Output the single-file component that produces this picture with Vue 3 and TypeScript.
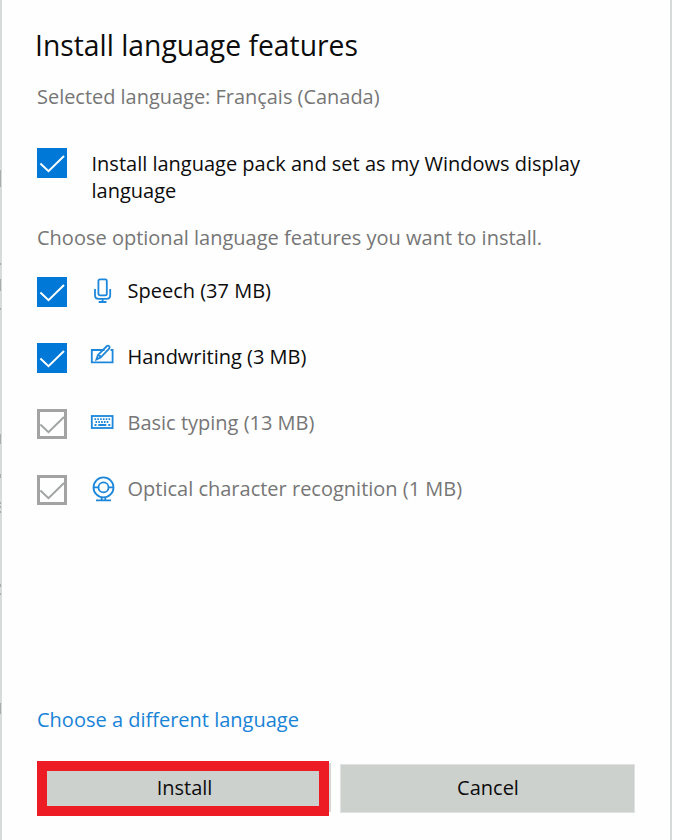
<script setup lang="ts">
import { ref } from 'vue'

type IconName = 'mic' | 'pen' | 'keyboard' | 'camera'

interface Feature {
  id: IconName
  label: string
  checked: boolean
  locked: boolean
}

const installPack = ref(true)
const features = ref<Feature[]>([
  { id: 'mic', label: 'Speech (37 MB)', checked: true, locked: false },
  { id: 'pen', label: 'Handwriting (3 MB)', checked: true, locked: false },
  { id: 'keyboard', label: 'Basic typing (13 MB)', checked: true, locked: true },
  { id: 'camera', label: 'Optical character recognition (1 MB)', checked: true, locked: true },
])

function toggle(feature: Feature) {
  if (!feature.locked) feature.checked = !feature.checked
}
</script>

<template>
  <main class="dialog">
    <svg class="edge" viewBox="0 0 2 840" aria-hidden="true">
      <path d="M.5 170v17M.5 263v2M.5 279v12M.5 308v2M.5 434v10M.5 474v4M.5 502v2M.5 506v2M.5 511v2M.5 584v3M.5 593v2M.5 703v11" />
    </svg>
    <h1 class="title">Install language features</h1>
    <p class="muted selected">Selected language: Français (Canada)</p>

    <div class="pack" @click="installPack = !installPack">
      <span class="box" :class="{ on: installPack }">
        <svg v-if="installPack" viewBox="0 0 30 30"><path d="M3.4 15.6 11.5 23.2 27 8" /></svg>
      </span>
      <span class="pack-label">Install language pack and set as my Windows display<br />language</span>
    </div>

    <p class="muted choose">Choose optional language features you want to install.</p>

    <ul class="features">
      <li v-for="f in features" :key="f.id" class="feature" :class="[f.id, { locked: f.locked }]" @click="toggle(f)">
        <span class="box" :class="{ on: f.checked && !f.locked, locked: f.locked }">
          <svg v-if="f.checked" viewBox="0 0 30 30"><path d="M3.4 15.6 11.5 23.2 27 8" /></svg>
        </span>
        <svg class="icon" viewBox="0 0 26 30">
          <g v-if="f.id === 'mic'">
            <rect x="8.4" y="2.3" width="8.4" height="16" rx="1.6" />
            <path d="M5 12v6.2q0 3.6 3.8 3.6h7.6q3.8 0 3.8-3.6v-6.2M12.6 21.8v3.3M8.7 25h7.8" />
          </g>
          <g v-else-if="f.id === 'pen'">
            <path d="M14.5 7H1.8v12.4h20.8V7h-2" />
            <path d="M6.4 16.5 8 11.9 16.9 3q1.2-.8 2.2.2t.2 2.2l-8.7 9.2zM8 11.9q2.3.4 2.6 2.7" />
          </g>
          <g v-else-if="f.id === 'keyboard'">
            <rect x="1.8" y="7" width="20.8" height="12" />
            <path class="keys" d="M4.5 10.2h16M5.5 13h14" />
            <path d="M4.5 16h2M8.3 16h8M18.3 16h2" />
          </g>
          <g v-else>
            <circle cx="13.5" cy="12.4" r="10" />
            <circle cx="13.5" cy="12.4" r="5" />
            <path d="M3.5 12.4h5M18.5 12.4h5M11.7 22.4v3M15.3 22.4v3M6 25.4h15" />
          </g>
        </svg>
        <span class="label">{{ f.label }}</span>
      </li>
    </ul>

    <a class="link">Choose a different language</a>

    <div class="actions">
      <button class="btn install" type="button"><span>Install</span></button>
      <button class="btn cancel" type="button"><span>Cancel</span></button>
    </div>
  </main>
</template>

<style>
body {
  margin: 0;
  background: #fff;
}
</style>

<style scoped>
.dialog {
  position: relative;
  box-sizing: border-box;
  width: 672px;
  height: 840px;
  padding: 26px 35px 24px;
  border-left: 2px solid #d7dcdb;
  border-right: 2px solid #d7dcdb;
  display: flex;
  flex-direction: column;
  background: #fefefe;
  color: #0c0c0c;
  font: 20px/27px 'Open Sans', 'Noto Sans', sans-serif;
}
.edge {
  position: absolute;
  left: -2px;
  top: 0;
  width: 2px;
  height: 840px;
  stroke: #aaadad;
  stroke-width: 1;
}
.title {
  margin: 0 0 0 -2px;
  font-size: 28.3px;
  font-weight: 400;
  line-height: 38px;
  white-space: nowrap;
}
p {
  margin: 0;
  white-space: nowrap;
}
.muted {
  color: #767676;
}
.selected {
  margin-top: 19px;
  font-size: 19.95px;
}
.pack {
  display: flex;
  gap: 24.5px;
  margin-top: 38px;
}
.pack-label {
  margin-top: 2px;
  white-space: nowrap;
}
.choose {
  margin-top: 20px;
}
.box {
  box-sizing: border-box;
  flex: none;
  width: 30px;
  height: 30px;
  border: 2px solid #555;
}
.box svg {
  display: block;
  width: 30px;
  height: 30px;
  margin: -2px;
  fill: none;
  stroke: #fff;
  stroke-width: 2;
}
.box.on {
  background: #0078d7;
  border-color: #0078d7;
}
.box.locked {
  border-width: 3px;
  border-color: #a3a3a3;
}
.box.locked svg {
  margin: -3px;
  stroke: #a0a5a2;
}
.features {
  list-style: none;
  margin: 26px 0 0;
  padding: 0;
  display: flex;
  flex-direction: column;
  gap: 36px;
}
.feature {
  display: flex;
  align-items: flex-start;
  height: 30px;
  white-space: nowrap;
}
.feature.locked {
  color: #767676;
}
.icon {
  width: 26px;
  height: 30px;
  margin: 0 11.5px 0 23px;
  fill: none;
  stroke: #1c87db;
  stroke-width: 1.8;
}
.keys {
  stroke-dasharray: 1.6 1.2;
}
.link {
  margin-top: auto;
  color: #1883d7;
  white-space: nowrap;
}
.actions {
  display: flex;
  gap: 11px;
  margin-top: 28px;
  height: 55px;
  align-items: center;
}
.btn {
  flex: none;
  box-sizing: border-box;
  padding: 0 0 1px 1px;
  border: 1px solid #e0e3e1;
  background: #cdd1ce;
  color: #0c0c0c;
  font: inherit;
  width: 295px;
  height: 49px;
}
.btn.cancel {
  margin-bottom: 1px;
}
.btn.install {
  width: 292px;
  height: 55px;
  padding: 0 0 2px 3px;
  border: 10px solid #ed1c24;
  box-shadow: 5px -1px 0 -3px #d5d8d6;
}
</style>
